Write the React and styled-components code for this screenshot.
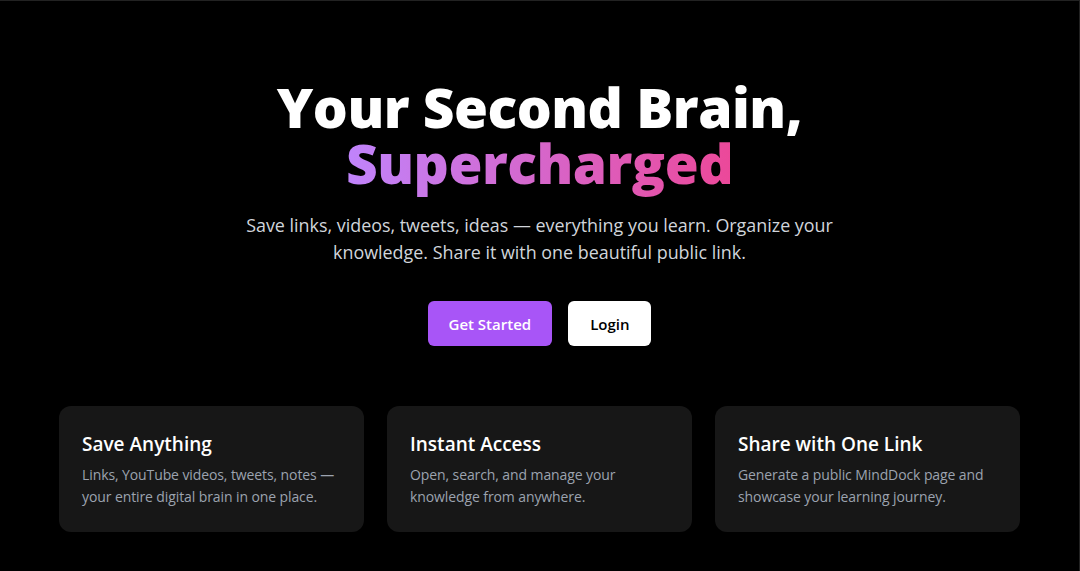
import React from "react";
import styled, { createGlobalStyle } from "styled-components";

const Global = createGlobalStyle`
  html, body { margin: 0; padding: 0; background: #000; }
  body { font-family: "Open Sans", "Noto Sans", sans-serif; color: #fff; }
  * { box-sizing: border-box; }
`;

const Page = styled.main`
  min-height: 571px;
  background: #000;
  border-top: 1px solid #222;
  border-right: 1px solid #222;
  display: flex;
  flex-direction: column;
  align-items: center;
  padding: 78px 59px 0 59px;
`;

const Title = styled.h1`
  margin: 0;
  font-size: 55px;
  line-height: 56px;
  font-weight: 800;
  text-align: center;
  letter-spacing: -0.5px;
`;

const Gradient = styled.span`
  background: linear-gradient(90deg, #c084fc, #ec4899);
  -webkit-background-clip: text;
  background-clip: text;
  color: transparent;
`;

const Subtitle = styled.p`
  margin: 21px 0 0;
  max-width: 600px;
  font-size: 17.9px;
  line-height: 27px;
  color: #d1d5db;
  text-align: center;
`;

const Actions = styled.div`
  display: flex;
  gap: 16px;
  margin-top: 35px;
`;

const Button = styled.button`
  height: 45px;
  padding: 0 ${(p) => (p.$primary ? "21px" : "22px")};
  border: none;
  border-radius: 6px;
  font-family: inherit;
  font-size: 15px;
  font-weight: 600;
  cursor: pointer;
  background: ${(p) => (p.$primary ? "#a855f7" : "#fff")};
  color: ${(p) => (p.$primary ? "#fff" : "#000")};
`;

const Features = styled.section`
  width: 100%;
  display: grid;
  grid-template-columns: repeat(3, 1fr);
  gap: 23px;
  margin-top: 60px;
`;

const Card = styled.div`
  background: #171717;
  border-radius: 12px;
  padding: 24px 22px 24px 23px;
`;

const CardTitle = styled.h3`
  margin: 0 0 6px;
  font-size: 19px;
  line-height: 28px;
  font-weight: 600;
  color: #fff;
`;

const CardText = styled.p`
  margin: 0;
  font-size: 14px;
  line-height: 22px;
  letter-spacing: -0.1px;
  color: #9ca3af;
`;

const features = [
  {
    title: "Save Anything",
    text: "Links, YouTube videos, tweets, notes — your entire digital brain in one place.",
  },
  {
    title: "Instant Access",
    text: "Open, search, and manage your knowledge from anywhere.",
  },
  {
    title: "Share with One Link",
    text: "Generate a public MindDock page and showcase your learning journey.",
  },
];

export default function App() {
  return (
    <>
      <Global />
      <Page>
        <Title>
          Your Second Brain,
          <br />
          <Gradient>Supercharged</Gradient>
        </Title>
        <Subtitle>
          Save links, videos, tweets, ideas — everything you learn. Organize your
          knowledge. Share it with one beautiful public link.
        </Subtitle>
        <Actions>
          <Button $primary>Get Started</Button>
          <Button>Login</Button>
        </Actions>
        <Features>
          {features.map((f) => (
            <Card key={f.title}>
              <CardTitle>{f.title}</CardTitle>
              <CardText>{f.text}</CardText>
            </Card>
          ))}
        </Features>
      </Page>
    </>
  );
}
